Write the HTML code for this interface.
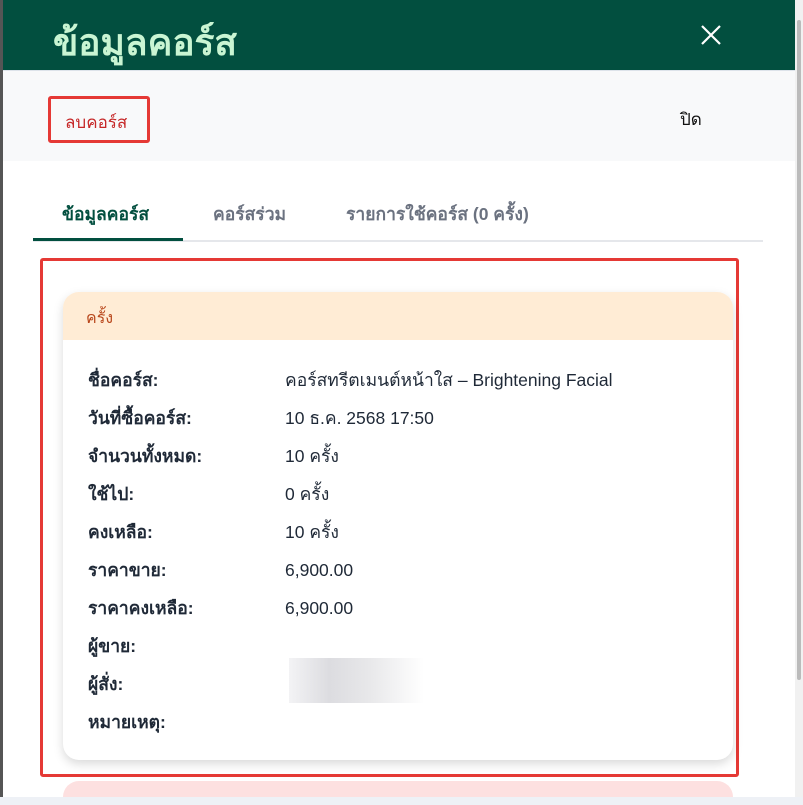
<!DOCTYPE html>
<html><head><meta charset="utf-8"><style>
*{box-sizing:border-box;margin:0;padding:0}
html{overflow:hidden;height:805px}
body{width:803px;height:805px;overflow:hidden;background:#fff;font-family:"Liberation Sans","Noto Sans CJK SC",sans-serif;position:relative}
.ls{position:absolute;left:0;top:0;width:3px;height:805px;background:#555}
.sb{position:absolute;left:795px;top:0;width:8px;height:805px;background:#f1f1f1}
.sb div{position:absolute;left:2px;top:20px;width:4px;height:660px;background:#bbb;border-radius:2px}
.hd{position:absolute;left:3px;top:0;width:792px;height:70px;background:#024f3f}
.hd h1{position:absolute;left:50px;top:13px;font-size:37px;color:#c9f5d3;font-weight:bold}
.x{position:absolute;left:697px;top:24px}
.ac{position:absolute;left:3px;top:70px;width:792px;height:91px;background:#f8f9fa;border-top:1px solid #dde3ea}
.del{position:absolute;left:45px;top:25px;width:102px;height:47px;border:3px solid #e53935;border-radius:3px;color:#c62828;font-size:17px;padding:10px 0 0 14px;background:#f8f9fa}
.close{position:absolute;left:677px;top:35px;font-size:17px;color:#111}
.tabs{position:absolute;left:33px;top:240px;width:730px;height:2px;background:#e5e7eb}
.tab{position:absolute;top:200px;font-size:17.5px;font-weight:bold;color:#6b7280}
.ul{position:absolute;left:33px;top:238px;width:150px;height:3px;background:#024f3f}
.rb{position:absolute;left:40px;top:258px;width:699px;height:519px;border:3px solid #e53935;border-radius:3px}
.card{position:absolute;left:63px;top:292px;width:670px;height:468px;background:#fff;border-radius:16px;box-shadow:0 4px 10px rgba(0,0,0,.15);overflow:hidden}
.ch{height:48px;background:#ffecd5;color:#b8461b;font-size:16px;padding:14px 0 0 23px}
.row{position:absolute;left:25px;font-size:17.5px;color:#1f2937}
.row b{display:inline-block;width:197px}
.pink{position:absolute;left:63px;top:781px;width:670px;height:40px;background:#fde0e0;border-radius:16px}
.blur{position:absolute;left:289px;top:658px;width:135px;height:45px;background:linear-gradient(90deg,#f3f3f5,#dcdce0 30%,#e8e8ea 60%,#fff)}
.bl{position:absolute;left:0;top:797px;width:803px;height:8px;background:#eef1f6;z-index:2}
</style></head><body>
<div class="ls"></div>
<div class="hd"><h1>ข้อมูลคอร์ส</h1><svg class="x" width="22" height="22" viewBox="0 0 22 22"><path d="M2 2L20 20M20 2L2 20" stroke="#fff" stroke-width="2.2"/></svg></div>
<div class="ac"><div class="del">ลบคอร์ส</div><div class="close">ปิด</div></div>
<div class="tab" style="left:62px;color:#024f3f">ข้อมูลคอร์ส</div>
<div class="tab" style="left:213px">คอร์สร่วม</div>
<div class="tab" style="left:346px">รายการใช้คอร์ส (0 ครั้ง)</div>
<div class="tabs"></div><div class="ul"></div>
<div class="pink"></div>
<div class="bl"></div>
<div class="rb"></div>
<div class="card"><div class="ch">ครั้ง</div>
<div class="row" style="top:74px"><b>ชื่อคอร์ส:</b>คอร์สทรีตเมนต์หน้าใส – Brightening Facial</div>
<div class="row" style="top:112px"><b>วันที่ซื้อคอร์ส:</b>10 ธ.ค. 2568 17:50</div>
<div class="row" style="top:150px"><b>จำนวนทั้งหมด:</b>10 ครั้ง</div>
<div class="row" style="top:188px"><b>ใช้ไป:</b>0 ครั้ง</div>
<div class="row" style="top:226px"><b>คงเหลือ:</b>10 ครั้ง</div>
<div class="row" style="top:264px"><b>ราคาขาย:</b>6,900.00</div>
<div class="row" style="top:302px"><b>ราคาคงเหลือ:</b>6,900.00</div>
<div class="row" style="top:340px"><b>ผู้ขาย:</b></div>
<div class="row" style="top:378px"><b>ผู้สั่ง:</b></div>
<div class="row" style="top:416px"><b>หมายเหตุ:</b></div>
</div>
<div class="blur"></div>
<div class="sb"><div></div></div>
</body></html>
